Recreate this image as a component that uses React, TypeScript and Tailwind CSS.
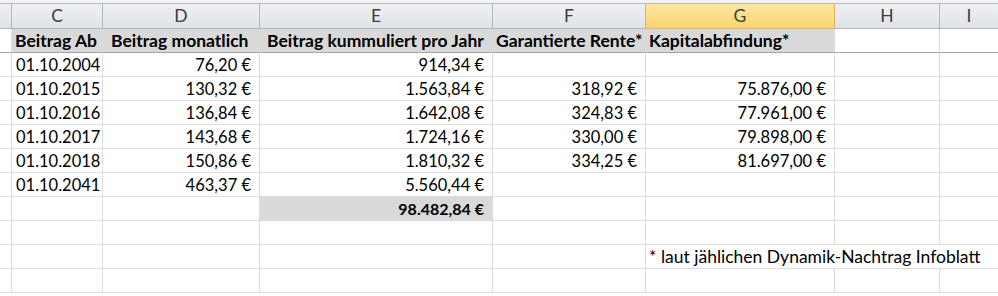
const cols = "grid grid-cols-[12px_91px_157px_233px_153px_189px_105px_1fr]";

type Cell = { text?: string; right?: boolean; bold?: boolean; gray?: boolean; pl?: string };

const rows: Cell[][] = [
  [
    { text: "01.10.2004" },
    { text: "76,20 €", right: true },
    { text: "914,34 €", right: true },
    {},
    {},
  ],
  [
    { text: "01.10.2015" },
    { text: "130,32 €", right: true },
    { text: "1.563,84 €", right: true },
    { text: "318,92 €", right: true },
    { text: "75.876,00 €", right: true },
  ],
  [
    { text: "01.10.2016" },
    { text: "136,84 €", right: true },
    { text: "1.642,08 €", right: true },
    { text: "324,83 €", right: true },
    { text: "77.961,00 €", right: true },
  ],
  [
    { text: "01.10.2017" },
    { text: "143,68 €", right: true },
    { text: "1.724,16 €", right: true },
    { text: "330,00 €", right: true },
    { text: "79.898,00 €", right: true },
  ],
  [
    { text: "01.10.2018" },
    { text: "150,86 €", right: true },
    { text: "1.810,32 €", right: true },
    { text: "334,25 €", right: true },
    { text: "81.697,00 €", right: true },
  ],
  [
    { text: "01.10.2041" },
    { text: "463,37 €", right: true },
    { text: "5.560,44 €", right: true },
    {},
    {},
  ],
  [{}, {}, { text: "98.482,84 €", right: true, bold: true, gray: true }, {}, {}],
  [{}, {}, {}, {}, {}],
];

const header: Cell[] = [
  { text: "Beitrag Ab" },
  { text: "Beitrag monatlich", pl: "pl-[8px]" },
  { text: "Beitrag kummuliert pro Jahr", pl: "pl-[7px]" },
  { text: "Garantierte Rente*" },
  { text: "Kapitalabfindung*" },
];

function DataCell({ c }: { c: Cell }) {
  return (
    <div
      className={`h-6 border-r border-b border-[#dadcdd] overflow-hidden whitespace-nowrap leading-[24px] ${
        c.right ? "text-right pr-[8px]" : "pl-[4px]"
      } ${c.bold ? "font-bold text-[16px]" : "text-[16.5px]"} ${c.gray ? "bg-[#d9d9d9]" : ""}`}
    >
      {c.text}
    </div>
  );
}

function Row({ cells }: { cells: Cell[] }) {
  return (
    <div className={cols}>
      <div className="h-6 border-r border-b border-[#dadcdd]" />
      {cells.map((c, i) => (
        <DataCell key={i} c={c} />
      ))}
      <div className="h-6 border-r border-b border-[#dadcdd]" />
      <div className="h-6 border-b border-[#dadcdd]" />
    </div>
  );
}

export default function App() {
  const letters = ["C", "D", "E", "F", "G", "H", "I"];
  return (
    <div
      className="w-[998px] h-[296px] overflow-hidden bg-white text-[17.5px] text-black"
      style={{ fontFamily: "Lato, 'Liberation Sans', sans-serif" }}
    >
      <div className="h-[3px] bg-[#f3f3f3]" />
      <div className="h-px bg-[#b7bcc3]" />

      {/* Spaltenköpfe */}
      <div className={cols}>
        <div className="h-[25px] border-r border-b border-[#b1b6bd] bg-gradient-to-b from-[#eef0f3] to-[#dfe3e8]" />
        {letters.map((l) =>
          l === "G" ? (
            <div
              key={l}
              className="h-[25px] border-r border-b border-r-[#e3b24f] border-b-[#f2b64a] bg-gradient-to-b from-[#fde7a3] to-[#fad46f] flex items-center justify-center text-[#3d3d3d]"
            >
              {l}
            </div>
          ) : (
            <div
              key={l}
              className={`h-[25px] border-b border-[#b1b6bd] ${
                l === "I" ? "" : "border-r"
              } bg-gradient-to-b from-[#eef0f3] to-[#dfe3e8] flex items-center justify-center text-[#3d3d3d]`}
            >
              {l}
            </div>
          )
        )}
      </div>

      {/* Kopfzeile */}
      <div className={cols}>
        <div className="h-6 border-r border-[#dadcdd] border-b border-b-[#a5a5a5]" />
        {header.map((c, i) => (
          <div
            key={i}
            className={`h-6 bg-[#d9d9d9] border-r border-[#d9d9d9] border-b border-b-[#a5a5a5] font-bold overflow-hidden whitespace-nowrap leading-[23px] ${
              c.pl ?? "pl-[3px]"
            } ${i === 4 ? "border-r-[#dadcdd]" : ""}`}
          >
            {c.text}
          </div>
        ))}
        <div className="h-6 border-r border-[#dadcdd] border-b border-b-[#a5a5a5]" />
        <div className="h-6 border-b border-b-[#a5a5a5]" />
      </div>

      {rows.map((r, i) => (
        <Row key={i} cells={r} />
      ))}

      {/* Fußnote */}
      <div className={cols}>
        <div className="h-6 border-r border-b border-[#dadcdd]" />
        <div className="h-6 border-r border-b border-[#dadcdd]" />
        <div className="h-6 border-r border-b border-[#dadcdd]" />
        <div className="h-6 border-r border-b border-[#dadcdd]" />
        <div className="h-6 border-r border-b border-[#dadcdd]" />
        <div className="h-6 border-b border-[#dadcdd] whitespace-nowrap leading-[23px] pl-[3px]">
          * laut jählichen Dynamik-Nachtrag Infoblatt
        </div>
        <div className="h-6 border-b border-[#dadcdd]" />
        <div className="h-6 border-b border-[#dadcdd]" />
      </div>

      <Row cells={[{}, {}, {}, {}, {}]} />
    </div>
  );
}
